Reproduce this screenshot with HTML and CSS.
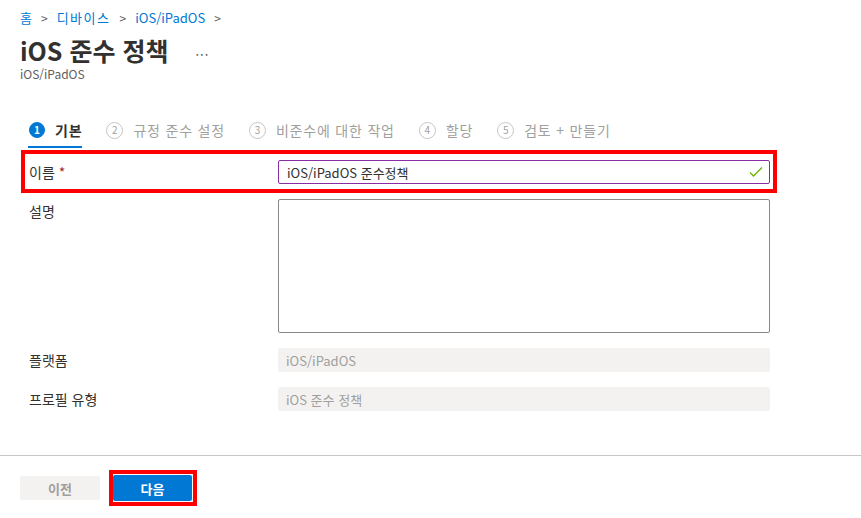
FILE: index.html
```html
<!DOCTYPE html>
<html lang="ko">
<head>
<meta charset="utf-8">
<link rel="stylesheet" href="styles.css">
</head>
<body>
<div class="page">
  <nav class="crumbs">
    <a class="crumb">홈</a><span class="sep">&gt;</span>
    <a class="crumb ko">디바이스</a><span class="sep">&gt;</span>
    <a class="crumb">iOS/iPadOS</a><span class="sep">&gt;</span>
  </nav>
  <div class="title-row">
    <h1 class="title">iOS 준수 정책</h1>
    <span class="more">...</span>
  </div>
  <div class="subtitle">iOS/iPadOS</div>

  <div class="tabs">
    <div class="tab active"><span class="num">1</span><span class="tab-label">기본</span></div>
    <div class="tab"><span class="num">2</span><span class="tab-label">규정 준수 설정</span></div>
    <div class="tab"><span class="num">3</span><span class="tab-label">비준수에 대한 작업</span></div>
    <div class="tab"><span class="num">4</span><span class="tab-label">할당</span></div>
    <div class="tab"><span class="num">5</span><span class="tab-label">검토 + 만들기</span></div>
  </div>

  <div class="form">
    <div class="row row-name hl">
      <label class="lbl">이름 <span class="req">*</span></label>
      <div class="input valid">
        <span class="value">iOS/iPadOS 준수정책</span>
        <svg class="check" width="14" height="12" viewBox="0 0 14 12"><polyline points="1,6.5 4.5,10 13,1.5" fill="none" stroke="#6bb700" stroke-width="1.3"/></svg>
      </div>
    </div>
    <div class="row row-desc">
      <label class="lbl">설명</label>
      <div class="textarea"></div>
    </div>
    <div class="row row-ro">
      <label class="lbl">플랫폼</label>
      <div class="input disabled">iOS/iPadOS</div>
    </div>
    <div class="row row-ro">
      <label class="lbl">프로필 유형</label>
      <div class="input disabled">iOS 준수 정책</div>
    </div>
  </div>
</div>
<footer class="footer">
  <div class="buttons">
    <button class="btn btn-prev">이전</button>
    <div class="btn-hl"><button class="btn btn-next">다음</button></div>
  </div>
</footer>
</body>
</html>
```
FILE: styles.css
```css
* { box-sizing: border-box; }
html, body { margin: 0; padding: 0; background: #fff; }
body {
  font-family: "Noto Sans CJK KR", "Noto Sans", sans-serif;
  color: #323130;
  font-size: 13px;
  width: 861px;
  height: 518px;
  overflow: hidden;
}
.page { padding: 8px 20px 0 20px; }

.crumbs { display: flex; align-items: center; height: 20px; line-height: 20px; font-size: 13px; }
.crumb { color: #0078d4; }
.crumb.ko { letter-spacing: 1.5px; }
.sep { color: #605e5c; margin: 0 9px; font-size: 12px; }

.title-row { display: flex; align-items: center; margin-top: 7px; height: 30px; }
.title { margin: 0; font-size: 25px; font-weight: 700; line-height: 30px; color: #323130; letter-spacing: 0; }
.more { margin-left: 27px; color: #605e5c; font-size: 13px; letter-spacing: 1px; padding-top: 2px; line-height: 16px; }
.subtitle { font-size: 12px; line-height: 16px; margin-top: 1px; color: #605e5c; }

.tabs { display: flex; gap: 24px; margin-top: 30px; margin-left: 8px; height: 36px; }
.tab { display: flex; align-items: center; gap: 10px; height: 36px; padding-top: 3px; padding-bottom: 1px; border-bottom: 2px solid transparent; font-size: 14px; color: #a19f9d; }
.tab-label { letter-spacing: 0.8px; }
.tab.active { border-bottom-color: #0078d4; color: #323130; font-weight: 700; }
.num {
  width: 17px; height: 17px; border-radius: 50%;
  border: 1px solid #c8c6c4; color: #a19f9d;
  display: flex; align-items: center; justify-content: center;
  font-size: 10px; font-weight: 400; line-height: 1;
}
.tab.active .num { width: 16px; height: 16px; background: #0078d4; border-color: #0078d4; color: #fff; font-weight: 700; margin-left: 1px; }

.form { width: 757px; }
.row { display: grid; grid-template-columns: 249px 492px; padding-left: 9px; }
.row.hl { border: 4px solid #ff0000; margin-left: 1px; padding: 6px 3px 5px 4px; margin-top: 2px; width: 756px; }
.lbl { font-size: 14px; line-height: 20px; padding-top: 2px; color: #323130; }
.req { color: #a4262c; }
.row-desc { margin-top: 6px; }
.row-ro { margin-top: 15px; }

.input {
  height: 24px; border: 1px solid #8a8886; border-radius: 2px;
  display: flex; align-items: center; padding: 0 8px; font-size: 13px;
}
.input.valid { border-color: #8a2da5; justify-content: space-between; color: #323130; padding-right: 6px; }
.input.disabled { border: none; background: #f3f2f1; color: #a19f9d; }
.check { display: block; }
.textarea { height: 134px; border: 1px solid #8a8886; border-radius: 2px; }

.footer { margin-top: 44px; border-top: 1px solid #c8c6c4; padding: 14px 20px 0; }
.buttons { display: flex; align-items: center; gap: 9px; }
.btn {
  font-family: inherit; font-size: 13px; font-weight: 700;
  border: none; border-radius: 2px; padding: 0; cursor: default;
  display: flex; align-items: center; justify-content: center;
}
.btn-prev { width: 80px; height: 24px; background: #f3f2f1; color: #a19f9d; }
.btn-hl { border: 4px solid #ff0000; padding: 1px 1px 1px 0; }
.btn-next { width: 79px; height: 26px; background: #0078d4; color: #fff; }
```
